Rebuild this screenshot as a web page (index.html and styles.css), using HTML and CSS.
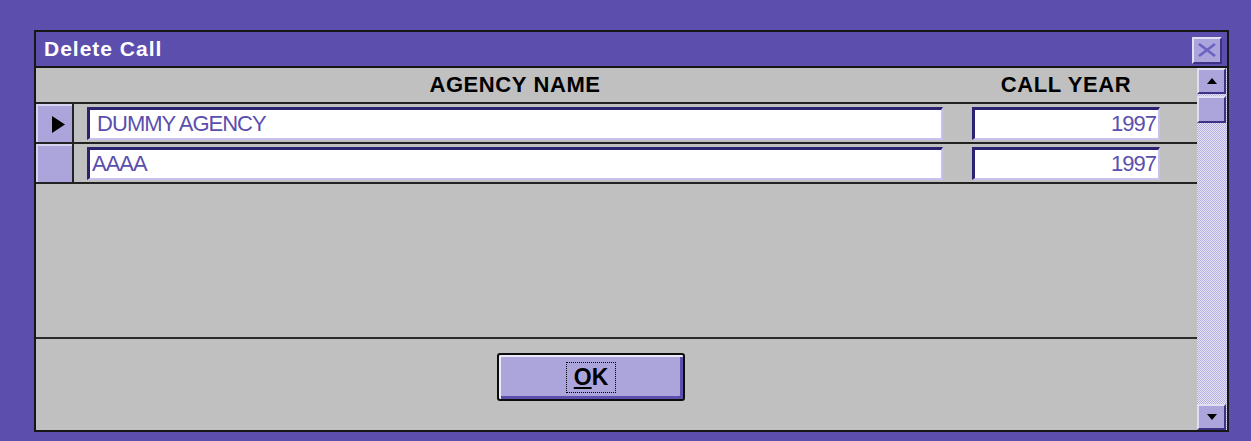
FILE: index.html
```html
<!DOCTYPE html>
<html>
<head>
<meta charset="utf-8">
<title>Delete Call</title>
<link rel="stylesheet" href="styles.css">
</head>
<body>
<div class="window">
  <div class="titlebar">
    <span class="title">Delete Call</span>
    <button class="close" type="button" aria-label="Close">
      <svg width="18" height="14" viewBox="0 0 18 14"><path d="M1 1 L17 13 M17 1 L1 13" stroke="#6c62c4" stroke-width="2.6" fill="none"/></svg>
    </button>
  </div>
  <div class="client">
    <div class="main">
      <div class="grid-head">
        <div class="sel-head"></div>
        <div class="col-agency head">AGENCY NAME</div>
        <div class="col-year head">CALL YEAR</div>
      </div>
      <div class="grid-row">
        <div class="sel current">
          <svg class="marker" width="13" height="17" viewBox="0 0 13 17"><polygon points="0,0 13,8.5 0,17" fill="#000"/></svg>
        </div>
        <div class="col-agency"><div class="field">&nbsp;DUMMY AGENCY</div></div>
        <div class="col-year"><div class="field num">1997</div></div>
      </div>
      <div class="grid-row">
        <div class="sel"></div>
        <div class="col-agency"><div class="field">AAAA</div></div>
        <div class="col-year"><div class="field num">1997</div></div>
      </div>
      <div class="empty"></div>
      <div class="footer">
        <button class="ok" type="button"><span class="focus"><u>O</u>K</span></button>
      </div>
    </div>
    <div class="scrollbar">
      <div class="sb-btn">
        <svg width="10" height="6" viewBox="0 0 10 6"><polygon points="5,0 10,6 0,6" fill="#000"/></svg>
      </div>
      <div class="sb-thumb"></div>
      <div class="sb-track"></div>
      <div class="sb-btn">
        <svg width="10" height="6" viewBox="0 0 10 6"><polygon points="0,0 10,0 5,6" fill="#000"/></svg>
      </div>
    </div>
  </div>
</div>
</body>
</html>
```

FILE: styles.css
```css
html, body {
  margin: 0;
  padding: 0;
}

body {
  width: 1251px;
  height: 441px;
  overflow: hidden;
  background: #5b4ead;
  font-family: "Liberation Sans", Arial, sans-serif;
}

.window {
  box-sizing: border-box;
  margin: 30px 0 0 34px;
  width: 1195px;
  height: 402px;
  border: 2px solid #161616;
  background: #c0c0c0;
  display: flex;
  flex-direction: column;
}

/* caption */
.titlebar {
  height: 34px;
  background: #5b4ead;
  border-bottom: 2px solid #161616;
  display: flex;
  align-items: center;
  justify-content: space-between;
  padding: 0 5px 0 8px;
}

.title {
  color: #fff;
  font-weight: bold;
  font-size: 21px;
  letter-spacing: 1px;
}

.close {
  box-sizing: border-box;
  width: 30px;
  height: 27px;
  margin-top: 2px;
  padding: 0;
  background: #aba5dc;
  border-style: solid;
  border-width: 2px;
  border-color: #e2dff4 #3c3288 #3c3288 #e2dff4;
  display: flex;
  align-items: center;
  justify-content: center;
}

/* client area */
.client {
  flex: 1;
  display: flex;
  min-height: 0;
}

.main {
  flex: 1;
  display: flex;
  flex-direction: column;
}

.grid-head,
.grid-row {
  display: flex;
  align-items: center;
}

.grid-head {
  height: 34px;
  border-bottom: 2px solid #222;
}

.grid-row {
  height: 38px;
  border-bottom: 2px solid #222;
}

.sel-head {
  width: 38px;
  align-self: stretch;
}

.sel {
  box-sizing: border-box;
  width: 36px;
  align-self: stretch;
  margin-right: 2px;
  background: #aba5dc;
  border-top: 2px solid #d6d3f0;
  border-left: 2px solid #d6d3f0;
  box-shadow: 2px 0 0 #222;
  display: flex;
  align-items: center;
  padding-left: 14px;
}

.marker {
  flex: none;
}

.col-agency {
  width: 856px;
  margin-left: 13px;
}

.col-year {
  width: 188px;
  margin-left: 29px;
}

.head {
  text-align: center;
  font-weight: bold;
  font-size: 22px;
  letter-spacing: 0.6px;
  color: #000;
}

/* text box cells */
.field {
  box-sizing: border-box;
  height: 33px;
  background: #fff;
  border-style: solid;
  border-width: 3px 2px 2px 3px;
  border-color: #2a2170 #c6c2ec #c6c2ec #2a2170;
  color: #5b4ead;
  font-size: 22px;
  letter-spacing: -1px;
  line-height: 28px;
  padding: 0 2px;
  white-space: nowrap;
}

.field.num {
  text-align: right;
}

.empty {
  flex: 1;
  border-bottom: 2px solid #2a2a2a;
}

.footer {
  height: 91px;
  padding: 14px 0 0 461px;
  box-sizing: border-box;
}

.ok {
  box-sizing: border-box;
  width: 188px;
  height: 48px;
  padding: 0;
  background: #aba5dc;
  border: 2px solid #0c0c0c;
  border-radius: 3px;
  box-shadow: inset 2px 2px 0 #eceaf8, inset -3px -3px 0 #5b4ead;
  display: flex;
  align-items: center;
  justify-content: center;
  font-family: "Liberation Sans", Arial, sans-serif;
  font-weight: bold;
  font-size: 23px;
  color: #000;
}

.focus {
  display: inline-block;
  width: 50px;
  height: 31px;
  box-sizing: border-box;
  border: 1px dotted #000;
  line-height: 29px;
  text-align: center;
}

.focus u {
  text-decoration-thickness: 2px;
  text-underline-offset: 2px;
}

/* vertical scroll bar */
.scrollbar {
  width: 30px;
  display: flex;
  flex-direction: column;
  background-color: #d8d5f0;
  background-image: repeating-conic-gradient(#b4aee0 0 25%, #e8e6f6 0 50%);
  background-size: 2px 2px;
}

.sb-btn,
.sb-thumb {
  box-sizing: border-box;
  width: 29px;
  background: #aba5dc;
  border-style: solid;
  border-width: 2px;
  border-color: #e2dff4 #3c3288 #3c3288 #e2dff4;
}

.sb-btn {
  height: 26px;
  display: flex;
  align-items: center;
  justify-content: center;
}

.sb-thumb {
  height: 27px;
  margin-top: 2px;
}

.sb-track {
  flex: 1;
}
```
